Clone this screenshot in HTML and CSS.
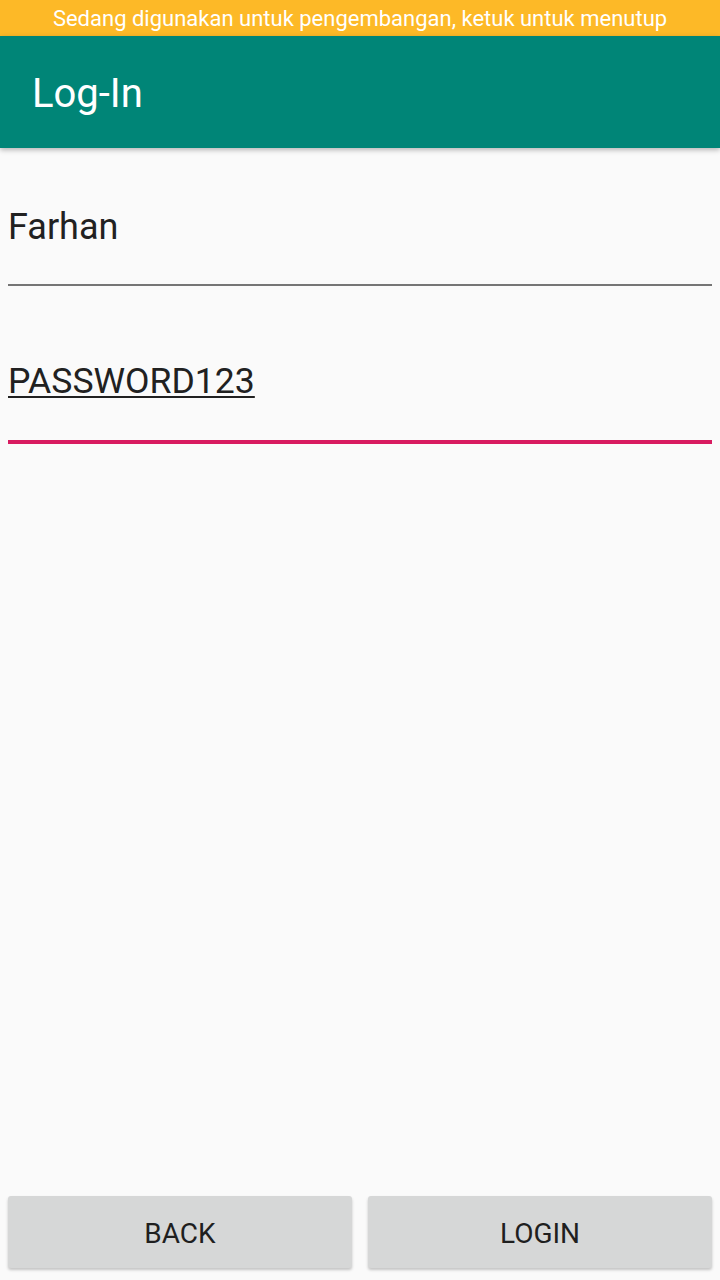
FILE: index.html
```html
<!DOCTYPE html>
<html>
<head>
<meta charset="utf-8">
<link rel="stylesheet" href="styles.css">
</head>
<body>
<div class="screen">
  <div class="status">Sedang digunakan untuk pengembangan, ketuk untuk menutup</div>
  <div class="toolbar"><span class="title">Log-In</span></div>
  <div class="form">
    <div class="field field-normal"><span class="value">Farhan</span></div>
    <div class="field field-focus"><span class="value composing">PASSWORD123</span></div>
  </div>
  <div class="buttons">
    <div class="btn"><span class="btn-label">BACK</span></div>
    <div class="btn"><span class="btn-label">LOGIN</span></div>
  </div>
</div>
</body>
</html>
```
FILE: styles.css
```css
html, body {
  margin: 0;
  padding: 0;
  background: #fafafa;
}
.screen {
  width: 720px;
  height: 1280px;
  display: flex;
  flex-direction: column;
  font-family: Roboto, "Noto Sans", sans-serif;
  background: #fafafa;
  overflow: hidden;
}
.status {
  height: 36px;
  background: #fdb927;
  color: #ffffff;
  font-size: 22px;
  line-height: 38px;
  text-align: center;
  flex: none;
}
.toolbar {
  height: 112px;
  box-sizing: border-box;
  background: #008577;
  padding: 38px 0 0 32px;
  box-shadow: 0 2px 5px rgba(0, 0, 0, 0.28);
  position: relative;
  z-index: 1;
  flex: none;
}
.title {
  display: block;
  color: #ffffff;
  font-size: 40px;
  line-height: 40px;
}
.form {
  padding: 58px 8px 0 8px;
  display: flex;
  flex-direction: column;
  gap: 74px;
}
.field {
  font-size: 36px;
  line-height: 42px;
  color: #212121;
}
.field-normal {
  padding-bottom: 36px;
  border-bottom: 2px solid #757575;
}
.field-focus {
  padding-bottom: 38px;
  border-bottom: 4px solid #d81b60;
}
.composing {
  font-size: 35.6px;
  text-decoration: underline;
  text-decoration-thickness: 2px;
  text-underline-offset: 3px;
}
.buttons {
  margin-top: auto;
  display: flex;
  gap: 16px;
  padding: 0 8px 12px 8px;
}
.btn {
  flex: 1;
  height: 72px;
  background: #d6d7d7;
  border-radius: 3px;
  box-shadow: 0 2px 3px rgba(0, 0, 0, 0.22);
  display: flex;
  align-items: center;
  justify-content: center;
}
.btn-label {
  font-size: 28px;
  color: #1f1f1f;
  padding-top: 2px;
}
```
